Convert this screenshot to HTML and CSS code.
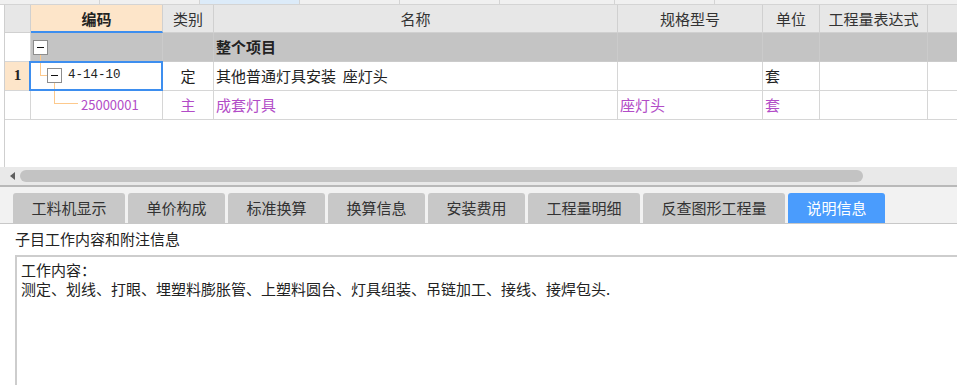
FILE: index.html
```html
<!DOCTYPE html>
<html lang="zh-CN">

<head>
    <meta charset="UTF-8">
    <title>说明信息</title>
    <link rel="stylesheet" href="styles.css">
</head>

<body>
  <div class="top-strip">
    <span></span><span></span><span class="cur"></span><span></span><span></span>
    <span class="wide"></span><span></span><span class="rest"></span>
  </div>

  <div class="grid-wrap">
    <div class="grid">
      <!-- header -->
      <div class="cell hd"></div>
      <div class="cell hd hd-code">编码</div>
      <div class="cell hd">类别</div>
      <div class="cell hd">名称</div>
      <div class="cell hd">规格型号</div>
      <div class="cell hd">单位</div>
      <div class="cell hd">工程量表达式</div>
      <div class="cell hd hd-cut">工程量</div>

      <!-- 整个项目 -->
      <div class="cell"></div>
      <div class="cell grp tree">
        <span class="node node-root"></span>
        <span class="ln ln-root-down"></span>
      </div>
      <div class="cell grp"></div>
      <div class="cell grp name bold">整个项目</div>
      <div class="cell grp"></div>
      <div class="cell grp"></div>
      <div class="cell grp"></div>
      <div class="cell grp"></div>

      <!-- row 1 -->
      <div class="cell rownum">1</div>
      <div class="cell tree sel">
        <span class="ln ln-r1-up"></span>
        <span class="ln ln-r1-h"></span>
        <span class="node node-r1"></span>
        <span class="code">4-14-10</span>
        <span class="ln ln-r1-down"></span>
      </div>
      <div class="cell center">定</div>
      <div class="cell name">其他普通灯具安装&nbsp; 座灯头</div>
      <div class="cell"></div>
      <div class="cell name">套</div>
      <div class="cell"></div>
      <div class="cell"></div>

      <!-- row 2 -->
      <div class="cell"></div>
      <div class="cell tree purple">
        <span class="ln ln-r2-up"></span>
        <span class="ln ln-r2-h"></span>
        <span class="code2">25000001</span>
      </div>
      <div class="cell center purple">主</div>
      <div class="cell name purple">成套灯具</div>
      <div class="cell name purple">座灯头</div>
      <div class="cell name purple">套</div>
      <div class="cell"></div>
      <div class="cell"></div>
    </div>
  </div>

  <div class="hscroll">
    <span class="arrow"></span>
    <div class="thumb"></div>
  </div>

  <div class="tab-bar">
    <div class="tab">工料机显示</div>
    <div class="tab">单价构成</div>
    <div class="tab">标准换算</div>
    <div class="tab">换算信息</div>
    <div class="tab">安装费用</div>
    <div class="tab">工程量明细</div>
    <div class="tab">反查图形工程量</div>
    <div class="tab active">说明信息</div>
  </div>

  <div class="detail">
    <div class="detail-title">子目工作内容和附注信息</div>
    <div class="memo">
      <p>工作内容：</p>
      <p>测定、划线、打眼、埋塑料膨胀管、上塑料圆台、灯具组装、吊链加工、接线、接焊包头.</p>
    </div>
  </div>
</body>

</html>
```

FILE: styles.css
```css
* {
    margin: 0;
    padding: 0;
    box-sizing: border-box;
}

body {
    width: 957px;
    height: 385px;
    overflow: hidden;
    background: #fff;
    font-family: "Noto Sans CJK SC", "Noto Sans", sans-serif;
    font-size: 15px;
    color: #333;
}

/* strip of the panel above */
.top-strip {
    display: flex;
    height: 5px;
    background: #f0f0f0;
    border-bottom: 1px solid #d4d4d4;
}

.top-strip span {
    width: 100px;
    flex: none;
    border-right: 1px solid #d4d4d4;
}

.top-strip .cur {
    background: #dcebf9;
}

.top-strip .wide {
    width: 115px;
}

.top-strip .rest {
    flex: 1;
    border-right: none;
}

/* grid */
.grid-wrap {
    margin-left: 4px;
    border-left: 1px solid #cfcfcf;
    height: 162px;
}

.grid {
    display: grid;
    grid-template-columns: 26px 132px 51px 404px 145px 57px 108px 100px;
    grid-template-rows: 28px;
    grid-auto-rows: 29px;
    overflow: hidden;
}

.cell {
    border-right: 1px solid #d6d6d6;
    border-bottom: 1px solid #d6d6d6;
    line-height: 27px;
    white-space: nowrap;
    overflow: hidden;
    color: #222;
}

.hd {
    background: #e7e7e7;
    text-align: center;
    color: #333;
    border-color: #d0d0d0;
}

.hd-code {
    background: #fde5c9;
    border-bottom: 2px solid #3d8eef;
    font-weight: bold;
    color: #222;
}

.hd-cut {
    text-indent: 30px;
    text-align: left;
}

.grp {
    background: #c4c4c4;
    border-color: #cbcbcb;
}

.name {
    padding-left: 2px;
}

.bold {
    font-weight: bold;
}

.center {
    text-align: center;
}

.purple {
    color: #b24cc7;
}

.rownum {
    background: #fde5c9;
    text-align: center;
    font-family: "Liberation Serif", serif;
    font-weight: bold;
    font-size: 15px;
    color: #222;
}

/* tree column */
.tree {
    position: relative;
    overflow: visible;
}

.sel {
    z-index: 1;
}

.sel::after {
    content: '';
    position: absolute;
    top: -1px;
    left: -2px;
    right: -1px;
    bottom: -1px;
    border: 2px solid #3d8eef;
}

.node {
    position: absolute;
    width: 15px;
    height: 15px;
    border: 1px solid #8d8d8d;
    background: #fff;
}

.node::before {
    content: '';
    position: absolute;
    left: 3px;
    right: 3px;
    top: 6px;
    height: 1px;
    background: #111;
}

.node-root {
    left: 2px;
    top: 7px;
}

.node-r1 {
    left: 16px;
    top: 6px;
}

.ln {
    position: absolute;
    background: #fdc98c;
}

.ln-root-down {
    left: 9px;
    top: 22px;
    width: 1px;
    height: 7px;
}

.ln-r1-up {
    left: 9px;
    top: 0;
    width: 1px;
    height: 14px;
}

.ln-r1-h {
    left: 9px;
    top: 13px;
    width: 7px;
    height: 1px;
}

.ln-r1-down {
    left: 23px;
    top: 21px;
    width: 1px;
    height: 8px;
}

.ln-r2-up {
    left: 23px;
    top: 0;
    width: 1px;
    height: 13px;
}

.ln-r2-h {
    left: 23px;
    top: 12px;
    width: 24px;
    height: 1px;
}

.code {
    position: absolute;
    left: 37px;
    top: 0;
    font-family: "Liberation Mono", monospace;
    font-size: 12.5px;
    line-height: 27px;
    color: #222;
}

.code2 {
    position: absolute;
    left: 50px;
    top: 0;
    font-size: 13px;
    line-height: 27px;
}

/* horizontal scrollbar */
.hscroll {
    display: flex;
    align-items: center;
    height: 20px;
    background: #e9e9e9;
    border-bottom: 2px solid #b9b9b9;
}

.arrow {
    margin-left: 10px;
    width: 0;
    height: 0;
    border-top: 4px solid transparent;
    border-bottom: 4px solid transparent;
    border-right: 5px solid #5f5f5f;
}

.thumb {
    margin-left: 5px;
    width: 843px;
    height: 12px;
    border-radius: 6px;
    background: #c3c3c3;
}

/* tabs */
.tab-bar {
    display: flex;
    gap: 3px;
    height: 37px;
    padding: 6px 0 0 13px;
    background: #f2f2f2;
    border-bottom: 1px solid #c8c8c8;
}

.tab {
    padding: 0 18.5px;
    line-height: 30px;
    background: #c8c8c8;
    border-radius: 3px 3px 0 0;
    color: #333;
    white-space: nowrap;
}

.tab.active {
    background: #4a9cfd;
    color: #fff;
}

/* detail */
.detail {
    padding: 5px 0 0 15px;
}

.detail-title {
    line-height: 20px;
    color: #222;
}

.memo {
    margin-top: 6px;
    width: 1000px;
    height: 140px;
    border-top: 2px solid #cdcdcd;
    border-left: 2px solid #cdcdcd;
    padding: 3px 0 0 4px;
    color: #222;
}

.memo p {
    line-height: 19px;
}
```
